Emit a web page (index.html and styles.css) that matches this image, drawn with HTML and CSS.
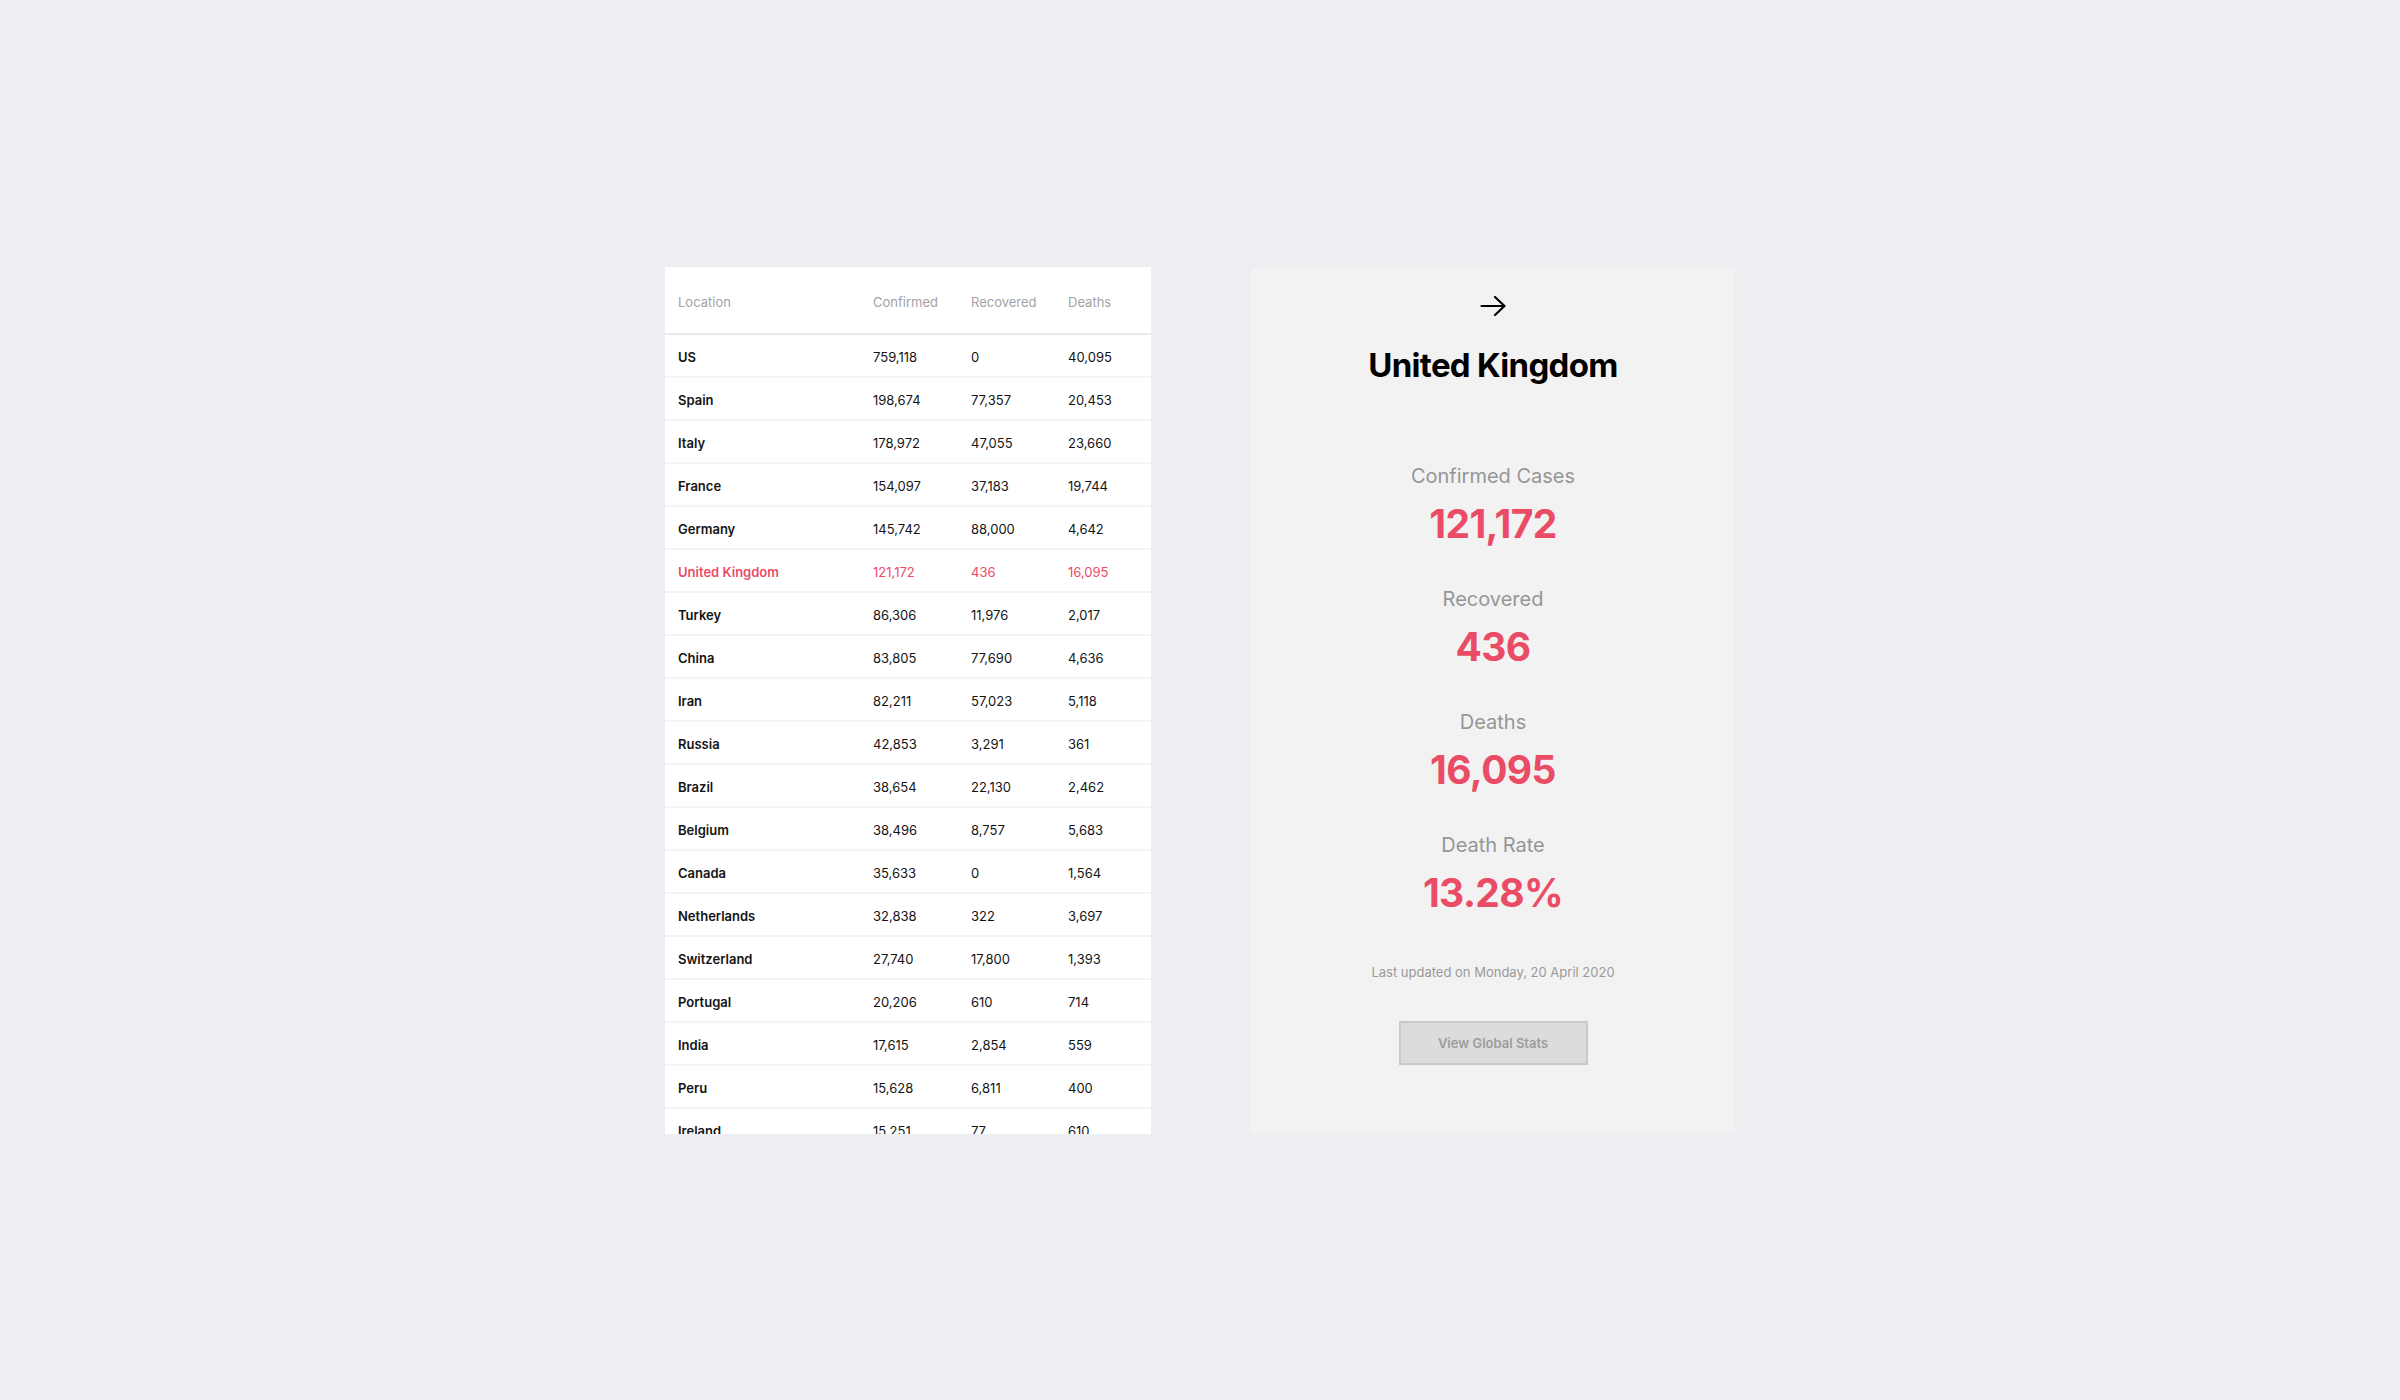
FILE: index.html
```html
<!DOCTYPE html>
<html lang="en">
<head>
<meta charset="utf-8">
<title>COVID-19 Stats</title>
<link rel="stylesheet" href="styles.css">
</head>
<body>
<main class="layout">
  <section class="table-card">
    <div class="row head">
      <div>Location</div><div>Confirmed</div><div>Recovered</div><div>Deaths</div>
    </div>
    <div class="row"><div class="loc">US</div><div>759,118</div><div>0</div><div>40,095</div></div>
    <div class="row"><div class="loc">Spain</div><div>198,674</div><div>77,357</div><div>20,453</div></div>
    <div class="row"><div class="loc">Italy</div><div>178,972</div><div>47,055</div><div>23,660</div></div>
    <div class="row"><div class="loc">France</div><div>154,097</div><div>37,183</div><div>19,744</div></div>
    <div class="row"><div class="loc">Germany</div><div>145,742</div><div>88,000</div><div>4,642</div></div>
    <div class="row active"><div class="loc">United Kingdom</div><div>121,172</div><div>436</div><div>16,095</div></div>
    <div class="row"><div class="loc">Turkey</div><div>86,306</div><div>11,976</div><div>2,017</div></div>
    <div class="row"><div class="loc">China</div><div>83,805</div><div>77,690</div><div>4,636</div></div>
    <div class="row"><div class="loc">Iran</div><div>82,211</div><div>57,023</div><div>5,118</div></div>
    <div class="row"><div class="loc">Russia</div><div>42,853</div><div>3,291</div><div>361</div></div>
    <div class="row"><div class="loc">Brazil</div><div>38,654</div><div>22,130</div><div>2,462</div></div>
    <div class="row"><div class="loc">Belgium</div><div>38,496</div><div>8,757</div><div>5,683</div></div>
    <div class="row"><div class="loc">Canada</div><div>35,633</div><div>0</div><div>1,564</div></div>
    <div class="row"><div class="loc">Netherlands</div><div>32,838</div><div>322</div><div>3,697</div></div>
    <div class="row"><div class="loc">Switzerland</div><div>27,740</div><div>17,800</div><div>1,393</div></div>
    <div class="row"><div class="loc">Portugal</div><div>20,206</div><div>610</div><div>714</div></div>
    <div class="row"><div class="loc">India</div><div>17,615</div><div>2,854</div><div>559</div></div>
    <div class="row"><div class="loc">Peru</div><div>15,628</div><div>6,811</div><div>400</div></div>
    <div class="row"><div class="loc">Ireland</div><div>15,251</div><div>77</div><div>610</div></div>
  </section>

  <section class="detail">
    <svg class="arrow" width="26" height="20" viewBox="0 0 26 20" fill="none" stroke="#000" stroke-width="2.2" stroke-linecap="round" stroke-linejoin="round" aria-hidden="true">
      <path d="M1.5 10H24.5M15 1L24.5 10L15 19"/>
    </svg>
    <h1 class="country">United Kingdom</h1>
    <div class="stats">
      <div class="stat"><div class="label">Confirmed Cases</div><div class="value">121,172</div></div>
      <div class="stat"><div class="label">Recovered</div><div class="value">436</div></div>
      <div class="stat"><div class="label">Deaths</div><div class="value">16,095</div></div>
      <div class="stat"><div class="label">Death Rate</div><div class="value">13.28%</div></div>
    </div>
    <p class="updated">Last updated on Monday, 20 April 2020</p>
    <button class="global-btn" type="button">View Global Stats</button>
  </section>
</main>
</body>
</html>
```

FILE: styles.css
```css
* { box-sizing: border-box; }

html, body {
  margin: 0;
  padding: 0;
}

body {
  background: #edeef1;
  font-family: Inter, "Noto Sans", "Liberation Sans", sans-serif;
  color: #111;
}

.layout {
  height: 1400px;
  display: flex;
  justify-content: center;
  align-items: center;
  gap: 100px;
}

.table-card {
  width: 486px;
  height: 867px;
  background: #fff;
  overflow: hidden;
}

.row {
  display: grid;
  grid-template-columns: 195px 98px 97px 1fr;
  align-items: center;
  height: 43px;
  padding-left: 13px;
  padding-top: 4px;
  border-bottom: 2px solid #f4f4f5;
  font-size: 13px;
  line-height: 16px;
  color: #141414;
}

.row.head {
  height: 68px;
  padding-top: 5px;
  border-bottom: 2px solid #e9e9ec;
  color: #a3a3a3;
  font-weight: 400;
}

.loc {
  font-weight: 600;
}

.row.active {
  color: #ea4c66;
}

.detail {
  width: 484px;
  height: 865px;
  background: #f2f2f2;
  display: flex;
  flex-direction: column;
  align-items: center;
  padding-top: 28px;
}

.arrow {
  display: block;
}

.country {
  margin: 29px 0 0;
  font-size: 33px;
  line-height: 40px;
  font-weight: 700;
  letter-spacing: -0.7px;
  color: #000;
}

.stats {
  margin-top: 79px;
  display: flex;
  flex-direction: column;
  align-items: center;
  gap: 38px;
}

.stat {
  display: flex;
  flex-direction: column;
  align-items: center;
}

.label {
  font-size: 20px;
  line-height: 24px;
  color: #969696;
}

.value {
  margin-top: 11px;
  font-size: 39px;
  line-height: 50px;
  font-weight: 700;
  letter-spacing: -0.6px;
  color: #ea4c66;
}

.updated {
  margin: 46px 0 0;
  font-size: 13px;
  line-height: 16px;
  color: #9a9a9a;
}

.global-btn {
  margin-top: 41px;
  width: 189px;
  height: 44px;
  background: #dcdcdc;
  border: 2px solid #c9c9c9;
  font-family: inherit;
  font-size: 13px;
  font-weight: 600;
  color: #9c9c9c;
  padding: 0;
}
```
